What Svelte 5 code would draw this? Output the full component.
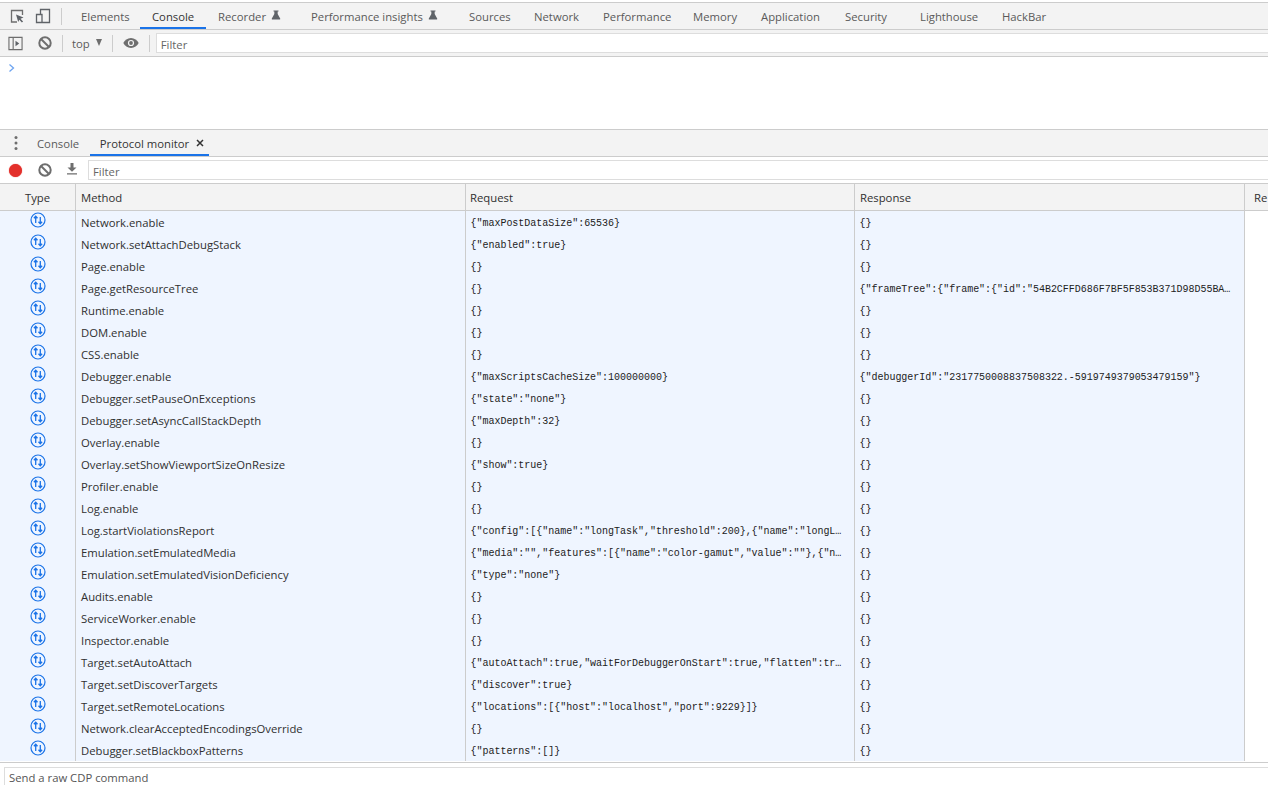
<script>
  const topTabs = [
    { name: 'Elements', w: 71 },
    { name: 'Console', w: 66, on: true },
    { name: 'Recorder', w: 93, flask: true },
    { name: 'Performance insights', w: 158, flask: true },
    { name: 'Sources', w: 65 },
    { name: 'Network', w: 69 },
    { name: 'Performance', w: 90 },
    { name: 'Memory', w: 68 },
    { name: 'Application', w: 84 },
    { name: 'Security', w: 75 },
    { name: 'Lighthouse', w: 82 },
    { name: 'HackBar', w: 70 }
  ];
  const rows = [
    ['Network.enable', '{"maxPostDataSize":65536}', '{}'],
    ['Network.setAttachDebugStack', '{"enabled":true}', '{}'],
    ['Page.enable', '{}', '{}'],
    ['Page.getResourceTree', '{}', '{"frameTree":{"frame":{"id":"54B2CFFD686F7BF5F853B371D98D55BA…'],
    ['Runtime.enable', '{}', '{}'],
    ['DOM.enable', '{}', '{}'],
    ['CSS.enable', '{}', '{}'],
    ['Debugger.enable', '{"maxScriptsCacheSize":100000000}', '{"debuggerId":"2317750008837508322.-5919749379053479159"}'],
    ['Debugger.setPauseOnExceptions', '{"state":"none"}', '{}'],
    ['Debugger.setAsyncCallStackDepth', '{"maxDepth":32}', '{}'],
    ['Overlay.enable', '{}', '{}'],
    ['Overlay.setShowViewportSizeOnResize', '{"show":true}', '{}'],
    ['Profiler.enable', '{}', '{}'],
    ['Log.enable', '{}', '{}'],
    ['Log.startViolationsReport', '{"config":[{"name":"longTask","threshold":200},{"name":"longL…', '{}'],
    ['Emulation.setEmulatedMedia', '{"media":"","features":[{"name":"color-gamut","value":""},{"n…', '{}'],
    ['Emulation.setEmulatedVisionDeficiency', '{"type":"none"}', '{}'],
    ['Audits.enable', '{}', '{}'],
    ['ServiceWorker.enable', '{}', '{}'],
    ['Inspector.enable', '{}', '{}'],
    ['Target.setAutoAttach', '{"autoAttach":true,"waitForDebuggerOnStart":true,"flatten":tr…', '{}'],
    ['Target.setDiscoverTargets', '{"discover":true}', '{}'],
    ['Target.setRemoteLocations', '{"locations":[{"host":"localhost","port":9229}]}', '{}'],
    ['Network.clearAcceptedEncodingsOverride', '{}', '{}'],
    ['Debugger.setBlackboxPatterns', '{"patterns":[]}', '{}']
  ];
</script>

<div class="page">
  <div class="tabbar main">
    <div class="tools">
      <svg class="ic" viewBox="0 0 16 16"><path d="M8 14H2.500V2.500h11V7" fill="none" stroke="#6e6e6e" stroke-width="1.300"/><path d="M7 6.500l7.500 3-3 1.200 2.600 2.800-1.200 1.100-2.600-2.800L9.200 14z" fill="#5f6368"/></svg>
      <svg class="ic" viewBox="0 0 16 16"><path d="M5.500 6V1.500h9v13h-9M1.500 6.500h5.500v8H1.500z" fill="none" stroke="#5f6368" stroke-width="1.300"/></svg>
      <span class="sep"></span>
    </div>
    {#each topTabs as t}
      <div class="tab" class:on={t.on} style:width="{t.w}px">{t.name}{#if t.flask}<svg class="flask" viewBox="0 0 12 12"><path d="M3 .5h6v1.200H8v3l3 5.600c.3.700 0 1.200-.8 1.200H1.800c-.8 0-1.100-.5-.8-1.200l3-5.600v-3H3z" fill="#5f6368"/></svg>{/if}</div>
    {/each}
  </div>

  <div class="toolbar console-bar">
    <svg class="dock" viewBox="0 0 16 16"><path d="M1 1.500h14v13H1zM5.500 1.500v13" fill="none" stroke="#6e6e6e" stroke-width="1.200"/><path d="M8 5l4 3-4 3z" fill="#5f6368"/></svg>
    <svg class="clear" viewBox="0 0 14 14"><circle cx="7" cy="7" r="5.700" fill="none" stroke="#6e6e6e" stroke-width="2"/><path d="M3 3l8 8" stroke="#6e6e6e" stroke-width="2"/></svg>
    <span class="sep"></span>
    <span class="ctx">top</span>
    <span class="tri"></span>
    <span class="sep"></span>
    <svg class="eye" viewBox="0 0 16 12"><path d="M8 1C4.500 1 1.800 3.200.3 6c1.500 2.800 4.200 5 7.700 5s6.200-2.200 7.700-5C14.200 3.200 11.500 1 8 1z" fill="#6e6e6e"/><circle cx="8" cy="6" r="3.100" fill="#f3f3f3"/><circle cx="8" cy="6" r="1.900" fill="#6e6e6e"/></svg>
    <span class="sep"></span>
    <div class="filter wide">Filter</div>
  </div>

  <div class="prompt">
    <svg viewBox="0 0 8 10" class="chev"><path d="M1.500 1.500L5.500 5l-4 3.500" fill="none" stroke="#6ea4f0" stroke-width="1.300"/></svg>
  </div>

  <div class="tabbar drawer">
    <svg class="dots" viewBox="0 0 4 16"><circle cx="2" cy="2.500" r="1.500"/><circle cx="2" cy="8" r="1.500"/><circle cx="2" cy="13.500" r="1.500"/></svg>
    <div class="dtab first">Console</div>
    <div class="dtab on pm">Protocol monitor<svg class="x" viewBox="0 0 8 8"><path d="M1 1l6 6M7 1L1 7" stroke="#333" stroke-width="1.500"/></svg></div>
  </div>

  <div class="toolbar pm-bar">
    <span class="rec-dot"></span>
    <svg class="clear2" viewBox="0 0 14 14"><circle cx="7" cy="7" r="5.700" fill="none" stroke="#6e6e6e" stroke-width="2"/><path d="M3 3l8 8" stroke="#6e6e6e" stroke-width="2"/></svg>
    <svg class="dl" viewBox="0 0 12 12"><path d="M4.500 0h3v4.500H10.500L6 8.800 1.500 4.500h3zM1 10.300h10v1.200H1z" fill="#6e6e6e"/></svg>
    <div class="filter">Filter</div>
  </div>

  <div class="table">
    <div class="row head">
      <div class="cell type">Type</div>
      <div class="cell">Method</div>
      <div class="cell req">Request</div>
      <div class="cell">Response</div>
      <div class="cell last">Re</div>
    </div>
    <div class="body">
      {#each rows as r}
        <div class="row">
          <div class="cell type">
            <svg class="msg" viewBox="0 0 16 16"><circle cx="8" cy="8" r="7" fill="none" stroke="#1a73e8" stroke-width="1.200"/><path d="M5.700 11V4.500M3.900 6.300l1.800-2 1.800 2M10.300 5v6.500M8.500 9.700l1.800 2 1.800-2" fill="none" stroke="#1a73e8" stroke-width="1.300"/></svg>
          </div>
          <div class="cell text">{r[0]}</div>
          <div class="cell mono">{r[1]}</div>
          <div class="cell mono">{r[2]}</div>
          <div class="cell last"></div>
        </div>
      {/each}
    </div>
  </div>

  <div class="cmd"><div class="cmd-input">Send a raw CDP command</div></div>
</div>

<style>
  :global(body) { margin: 0; background: #fff; }
  .page {
    width: 1268px; height: 785px; overflow: hidden;
    display: flex; flex-direction: column;
    font: 11.3px "Open Sans", sans-serif; color: #333;
    padding-top: 2px; box-sizing: border-box;
  }
  .tabbar {
    display: flex; align-items: stretch;
    background: #f3f3f3;
    border-top: 1px solid #ccc; border-bottom: 1px solid #ccc;
    flex: none; box-sizing: border-box;
  }
  .main { height: 28px; }
  .drawer { height: 28px; }
  .tools { display: flex; align-items: center; width: 69px; flex: none; padding-left: 9px; box-sizing: border-box; gap: 10px; }
  .ic { width: 16px; height: 16px; }
  .sep { width: 1px; height: 17px; background: #ccc; flex: none; }
  .tab {
    display: flex; align-items: center; padding-left: 12px; box-sizing: border-box; flex: none;
    color: #5a5a5a; white-space: nowrap;
  }
  .dtab {
    display: flex; align-items: center;
    color: #5a5a5a; white-space: nowrap;
  }
  .first { padding: 0 10.500px 0 8px; }
  .on { color: #333; box-shadow: inset 0 -2px 0 #1a73e8; }
  .flask { width: 10px; height: 10px; margin: -3px 0 0 5px; }

  .toolbar { display: flex; align-items: center; flex: none; box-sizing: border-box; }
  .console-bar { height: 27px; background: #f3f3f3; border-bottom: 1px solid #ccc; padding-left: 8px; }
  .dock { width: 15px; height: 15px; }
  .clear { width: 14px; height: 14px; margin: 0 10px 0 15px; }
  .ctx { margin-left: 9px; color: #5a5a5a; padding-top: 1px; }
  .tri {
    width: 0; height: 0; margin: -2px 10px 0 6px;
    border-left: 3.500px solid transparent; border-right: 3.500px solid transparent; border-top: 7px solid #6e6e6e;
  }
  .eye { width: 16px; height: 12px; margin: 0 10px 0 10px; }
  .filter {
    flex: 1; height: 20px; line-height: 19px; padding-top: 1px; background: #fff;
    border: 1px solid #ddd; border-width: 1px 0 1px 1px; padding-left: 4px; color: #666; box-sizing: border-box;
  }
  .wide { margin-left: 6px; }

  .prompt { height: 72px; flex: none; padding: 6px 0 0 8px; box-sizing: border-box; }
  .chev { width: 8px; height: 10px; display: block; }

  .dots { width: 4px; height: 16px; fill: #6e6e6e; margin: 5px 11px 0 14px; flex: none; }
  .pm { padding: 0 5px 0 10px; }
  .x { width: 8px; height: 8px; margin-left: 7px; }

  .pm-bar { height: 27px; background: #fff; padding-left: 9px; border-bottom: 1px solid #ccc; }
  .rec-dot { width: 13px; height: 13px; border-radius: 50%; background: #e3302b; flex: none; box-shadow: 0 0 1px #e3302b; }
  .clear2 { width: 14px; height: 14px; margin-left: 16px; }
  .dl { width: 12px; height: 12px; margin: -2px 10px 0 14px; }

  .table { flex: 1; min-height: 0; display: flex; flex-direction: column; border-bottom: 1px solid #ccc; }
  .row {
    display: grid; grid-template-columns: 76px 390px 389px 390px 100px;
    height: 22px; background: #eff5ff;
    width: 1345px;
  }
  .row .last { background: #fff; }
  .head { height: 27px; background: #f3f3f3; border-bottom: 1px solid #ccc; box-sizing: border-box; flex: none; }
  .head .last { background: #f3f3f3; padding-left: 9px; }
  .head .cell { line-height: 27px; }
  .head .req { padding-left: 4px; }
  .body { flex: 1; min-height: 0; overflow: hidden; }
  .cell {
    border-right: 1px solid #ccc; padding-left: 5px; line-height: 22px;
    overflow: hidden; white-space: nowrap; color: #303030; box-sizing: border-box; min-width: 0;
  }
  .type { padding: 0; text-align: center; display: flex; justify-content: center; }
  .msg { width: 16px; height: 16px; margin-top: 1px; }
  .head .type { display: block; }
  .text { padding-top: 1px; }
  .mono { font: 10px/22px "Liberation Mono", monospace; color: #222; padding: 2px 0 0 4.500px; letter-spacing: -0.02px; }

  .cmd { height: 22px; flex: none; padding: 4px 0 0 4px; box-sizing: border-box; }
  .cmd-input { height: 20px; line-height: 20px; border: 1px solid #ddd; border-right: 0; padding-left: 4px; color: #555; box-sizing: border-box; }
</style>
